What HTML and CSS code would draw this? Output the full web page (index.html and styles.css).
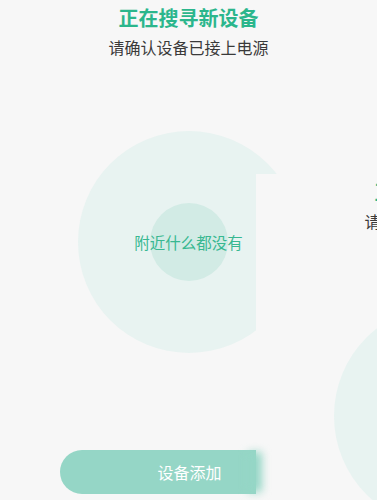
FILE: index.html
```html
<!DOCTYPE html>
<html lang="zh-CN">
<head>
<meta charset="UTF-8">
<meta name="viewport" content="width=device-width, initial-scale=1.0">
<title>搜寻新设备</title>
<link rel="stylesheet" href="styles.css">
</head>
<body>
<div class="screen">
    <!-- current page -->
    <div class="page">
        <h1 class="title">正在搜寻新设备</h1>
        <p class="sub">请确认设备已接上电源</p>
        <div class="radar">
            <div class="core"><span>附近什么都没有</span></div>
        </div>
        <button class="add">设备添加</button>
    </div>

    <!-- next page sliding in -->
    <div class="page next">
        <h1 class="title">正在搜寻新设备</h1>
        <p class="sub">请确认设备已接上电源</p>
        <div class="radar">
            <div class="core"><span>附近什么都没有</span></div>
        </div>
        <button class="add">设备添加</button>
    </div>
    <div class="smear"></div>
</div>
</body>
</html>
```

FILE: styles.css
```css
/* Basic styling */
body {
    margin: 0;
    padding: 0;
    background: #f6f6f6;
    font-family: "Noto Sans CJK SC", "Noto Sans", sans-serif;
}
.screen {
    position: relative;
    width: 377px;
    height: 500px;
    overflow: hidden;
    background: #f6f6f6;
}
.page {
    width: 377px;
    height: 500px;
    padding-top: 4px;
    box-sizing: border-box;
    display: flex;
    flex-direction: column;
    align-items: center;
    background: #f7f7f7;
}
.next {
    position: absolute;
    left: 256px;
    top: 174px;
    z-index: 1;
}
.title {
    margin: 0;
    font-size: 20px;
    line-height: 28px;
    font-weight: 700;
    color: #2bb68c;
}
.sub {
    margin: 3px 0 0;
    font-size: 16px;
    line-height: 24px;
    color: #3a3a3a;
}
.radar {
    margin-top: 72px;
    width: 222px;
    height: 222px;
    border-radius: 50%;
    background: #e8f3f1;
    display: flex;
    align-items: center;
    justify-content: center;
}
.core {
    width: 78px;
    height: 78px;
    border-radius: 50%;
    background: #d2ebe5;
    display: flex;
    align-items: center;
    justify-content: center;
}
.core span {
    white-space: nowrap;
    font-size: 15.5px;
    color: #38b891;
}
.add {
    margin-top: 97px;
    width: 257px;
    height: 44px;
    margin-left: 0;
    align-self: flex-start;
    position: relative;
    left: 60px;
    border: none;
    border-radius: 22px 0 0 22px;
    background: #95d6c6;
    color: #fff;
    font-family: inherit;
    font-size: 16px;
    padding: 0 0 0 2px;
}
.smear {
    position: absolute;
    left: 248px;
    top: 452px;
    width: 14px;
    height: 40px;
    background: #95d6c6;
    filter: blur(4px);
    z-index: 2;
}
```
